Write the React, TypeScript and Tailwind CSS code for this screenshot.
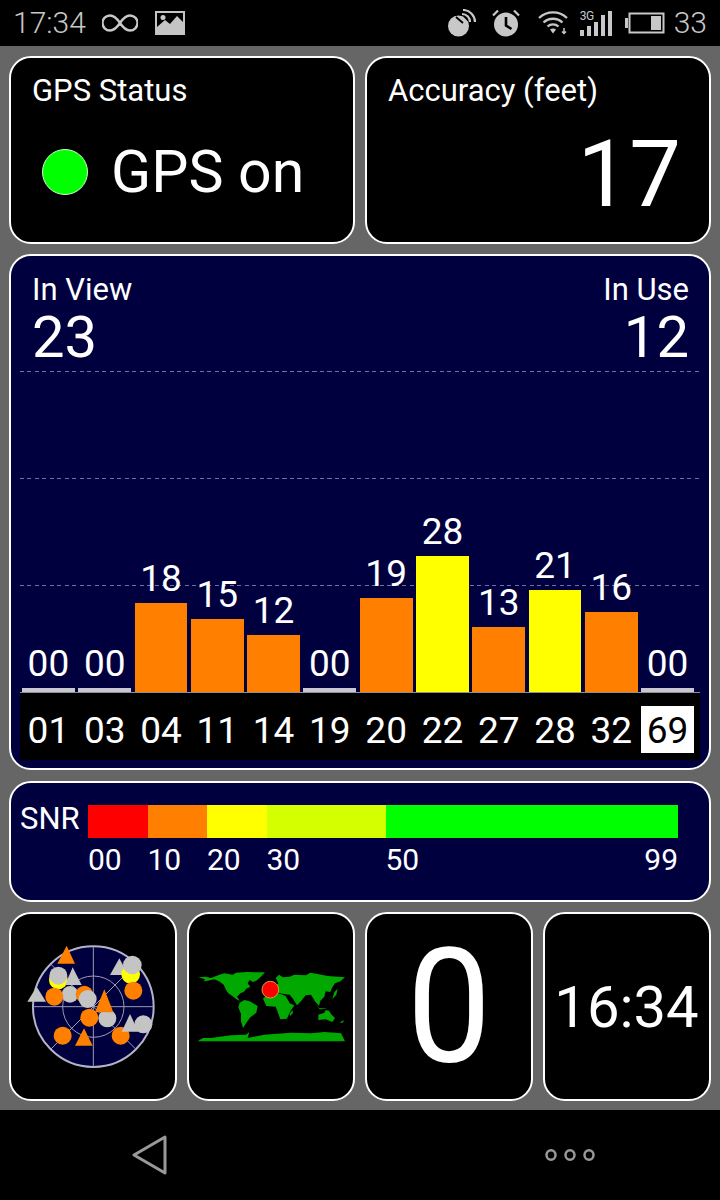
const FONT = "font-['Roboto',sans-serif]";

type Sat = { id: string; snr: number; color: string; height: number; active?: boolean };

const sats: Sat[] = [
  { id: "01", snr: 0, color: "bg-[#c8c8d0]", height: 4 },
  { id: "03", snr: 0, color: "bg-[#c8c8d0]", height: 4 },
  { id: "04", snr: 18, color: "bg-[#ff8000]", height: 89 },
  { id: "11", snr: 15, color: "bg-[#ff8000]", height: 73 },
  { id: "14", snr: 12, color: "bg-[#ff8000]", height: 57 },
  { id: "19", snr: 0, color: "bg-[#c8c8d0]", height: 4 },
  { id: "20", snr: 19, color: "bg-[#ff8000]", height: 94 },
  { id: "22", snr: 28, color: "bg-[#ffff00]", height: 136 },
  { id: "27", snr: 13, color: "bg-[#ff8000]", height: 65 },
  { id: "28", snr: 21, color: "bg-[#ffff00]", height: 102 },
  { id: "32", snr: 16, color: "bg-[#ff8000]", height: 80 },
  { id: "69", snr: 0, color: "bg-[#c8c8d0]", height: 4, active: true },
];

function fmt(n: number) {
  return n.toString().padStart(2, "0");
}

function StatusBar() {
  return (
    <div className="flex h-[46px] shrink-0 items-center bg-black pl-[13px] pr-[13px] text-[#c8c8c8]">
      <span className="text-[30px] font-light leading-none">17:34</span>
      <svg className="ml-[16px]" width="36" height="20" viewBox="0 0 36 20" fill="none" stroke="#c8c8c8" strokeWidth="2.4">
        <path d="M18 10C14 4 11 2.5 8 2.5a7.5 7.5 0 0 0 0 15c3 0 6-1.5 10-7.5s7-7.5 10-7.5a7.5 7.5 0 0 1 0 15c-3 0-6-1.5-10-7.5z" />
      </svg>
      <svg className="ml-[17px]" width="30" height="24" viewBox="0 0 30 24">
        <path fillRule="evenodd" fill="#c4c4c4" d="M0 0h30v24H0zM2 2v14l8-7 5 4 7-8 6 6V2z" />
        <circle cx="8" cy="6.5" r="2.5" fill="#c8c8c8" />
      </svg>
      <div className="ml-auto flex items-center">
        {/* GPS dish */}
        <svg width="30" height="28" viewBox="0 0 30 28" fill="none">
          <circle cx="11.5" cy="17" r="10.5" fill="#c8c8c8" />
          <path stroke="#000" strokeWidth="1.8" d="M9 8 16 14M17 7 22 12" />
          <path stroke="#c8c8c8" strokeWidth="2.2" d="M15 5c5 0 8 4 8 8M16 1c7 0 12 6 12 12" />
        </svg>
        {/* Alarm clock */}
        <svg className="ml-[15px]" width="28" height="28" viewBox="0 0 28 28">
          <circle cx="14" cy="15.5" r="12" fill="#c8c8c8" />
          <path d="M14 8v8.5l5.5 3.5" fill="none" stroke="#000" strokeWidth="2.6" />
          <path d="M1 6.5 6 1.5M27 6.5 22 1.5" stroke="#c8c8c8" strokeWidth="2.2" />
        </svg>
        {/* Wi-Fi with download arrow */}
        <svg className="ml-[18px]" width="30" height="24" viewBox="0 0 30 24" fill="none" stroke="#c8c8c8">
          <path strokeWidth="2.3" d="M1 7c8-7.5 20-7.5 28 0M5.5 11.5c5.5-5 13.5-5 19 0M9.5 15.5c3-2.8 8-2.8 11 0" />
          <path fill="#c8c8c8" stroke="none" d="M12 18.5c1.5-1.2 4.5-1.2 6 0l-3 4z" />
          <path strokeWidth="1.5" d="M26 17v5.5M24 20.5l2 2 2-2" />
        </svg>
        {/* Cellular signal */}
        <div className="relative ml-[12px] h-[25px] w-[32px]">
          <span className="absolute left-0 top-[-1px] text-[12px] leading-none tracking-[-0.5px] text-[#c8c8c8]">3G</span>
          <svg className="absolute inset-0" width="32" height="25" viewBox="0 0 32 25" fill="#c8c8c8">
            <path d="M0 19h4v6H0zM7 15h4v10H7zM14 11h4v14h-4zM21 4h4v21h-4zM28 0h4v25h-4z" />
          </svg>
        </div>
        {/* Battery */}
        <svg className="ml-[13px]" width="40" height="22" viewBox="0 0 40 22">
          <path fill="#c8c8c8" d="M0 6h3v10H0z" />
          <rect x="4.5" y="1.5" width="34" height="19" fill="none" stroke="#c8c8c8" strokeWidth="2" />
          <path fill="#c8c8c8" d="M26 4h10v14H26z" />
        </svg>
        <span className="ml-[9px] text-[30px] font-light leading-none">33</span>
      </div>
    </div>
  );
}

function Card({ className, children }: { className: string; children?: React.ReactNode }) {
  return <div className={`rounded-[22px] border-2 border-white ${className}`}>{children}</div>;
}

function Radar() {
  const gray = "#c4c4c4";
  const orange = "#ff8000";
  const yellow = "#ffff00";
  return (
    <svg className="mb-[9px] mr-[6px]" width="140" height="134" viewBox="0 0 420 402">
      <circle cx="220" cy="215" r="181" fill="#00003f" stroke="#b4b4c8" strokeWidth="6" />
      <g stroke="#9c9cb4" strokeWidth="3" fill="none">
        <circle cx="220" cy="215" r="92" />
        <path d="M220 34V396M39 215H401M92 87 348 343M348 87 92 343" />
      </g>
      <path fill={orange} d="M140 32 165 86H112z" />
      <path fill={gray} d="M50 155 78 200H22z" />
      <circle cx="115" cy="135" r="28" fill={yellow} />
      <circle cx="115" cy="122" r="27" fill={gray} />
      <path fill={gray} d="M158 97 185 150H135z" />
      <path fill={gray} d="M298 70 325 120H270z" />
      <circle cx="332" cy="118" r="28" fill={yellow} />
      <circle cx="337" cy="90" r="28" fill={gray} />
      <circle cx="340" cy="167" r="27" fill={orange} />
      <circle cx="150" cy="178" r="25" fill={gray} />
      <circle cx="103" cy="185" r="27" fill={orange} />
      <circle cx="193" cy="178" r="26" fill={orange} />
      <circle cx="203" cy="192" r="27" fill={gray} />
      <circle cx="262" cy="250" r="27" fill={gray} />
      <path fill={orange} d="M253 163 280 232H225z" />
      <circle cx="208" cy="248" r="27" fill={orange} />
      <circle cx="128" cy="302" r="27" fill={orange} />
      <path fill={orange} d="M192 280 218 332H165z" />
      <circle cx="302" cy="302" r="27" fill={orange} />
      <path fill={gray} d="M330 237 355 290H305z" />
      <circle cx="370" cy="268" r="27" fill={gray} />
    </svg>
  );
}

function WorldMap() {
  return (
    <svg className="mb-[1px]" width="160" height="85" viewBox="0 0 480 255">
      <g fill="#00a800">
        {/* North America and Greenland */}
        <path d="M22 40 44 38 60 42 85 32 100 28 125 32 135 26 168 24 222 25 212 36 196 50 186 54 176 48 170 58 178 68 166 74 158 84 148 88 138 98 146 110 136 106 124 96 112 88 104 76 98 62 84 52 70 46 50 50 38 52 42 46z" />
        {/* South America */}
        <path d="M146 116 160 108 176 112 200 126 196 146 178 160 166 176 156 192 150 172 150 150 142 130z" />
        {/* Eurasia */}
        <path d="M254 42 264 32 276 40 296 38 310 32 345 34 358 26 380 30 410 36 462 40 448 52 432 58 424 70 418 84 404 82 400 98 388 110 384 126 372 112 360 92 344 94 330 112 318 124 306 104 296 92 278 90 262 86 252 70 262 58z" />
        {/* Africa */}
        <path d="M216 104 228 92 262 88 284 96 296 118 310 124 298 142 288 164 268 166 258 138 254 128 226 126z" />
        {/* Australia and islands */}
        <path d="M382 152 400 146 404 138 414 140 420 150 432 162 424 174 404 166 382 168z" />
        <path d="M446 176 458 168 456 176z" />
        <path d="M372 118 384 132 410 134 386 136z" />
        <path d="M304 138 306 146 298 156 296 150z" />
        <path d="M430 84 440 74 436 92 424 106z" />
        {/* Antarctica */}
        <path d="M22 230 36 222 60 222 120 214 165 212 175 204 170 222 220 212 300 206 360 208 400 204 450 208 462 232 22 232z" />
      </g>
      <circle cx="238" cy="77" r="25" fill="#ff0000" stroke="#d8a030" strokeWidth="3" />
    </svg>
  );
}

function Chart() {
  return (
    <Card className="flex h-[516px] flex-col bg-[#00003f]">
      <div className="flex h-[115px] justify-between pl-[21px] pr-[20px] pt-[16px] text-white">
        <div>
          <div className="text-[31px] leading-[36px]">In View</div>
          <div className="text-[58px] leading-[58px]">23</div>
        </div>
        <div className="text-right">
          <div className="text-[31px] leading-[36px]">In Use</div>
          <div className="text-[58px] leading-[58px]">12</div>
        </div>
      </div>
      <div className="relative mx-[9px] h-[321px]">
        {/* Dashed SNR reference lines */}
        <div className="absolute inset-0 flex flex-col gap-[106px]">
          <div className="h-px bg-[repeating-linear-gradient(90deg,#7070a8_0_4px,transparent_4px_7.5px)]" />
          <div className="h-px bg-[repeating-linear-gradient(90deg,#7070a8_0_4px,transparent_4px_7.5px)]" />
          <div className="h-px bg-[repeating-linear-gradient(90deg,#7070a8_0_4px,transparent_4px_7.5px)]" />
        </div>
        <div className="relative grid h-full grid-cols-12 items-end gap-x-[3.5px] pl-[2px] pr-[6px]">
          {sats.map((s) => (
            <div key={s.id} className="flex flex-col items-center">
              <span className="mb-[5px] text-[37px] leading-[38px] text-white">{fmt(s.snr)}</span>
              <div className={`w-full ${s.color}`} style={{ height: s.height }} />
            </div>
          ))}
        </div>
      </div>
      <div className="mx-[9px] grid h-[68px] grid-cols-12 gap-x-[3.5px] border-t border-[#8c8c9c] bg-black pl-[2px] pr-[6px] pt-[13px] text-white">
        {sats.map((s) => (
          <div
            key={s.id}
            className={`flex h-[47px] items-center justify-center pt-[2px] text-[37px] leading-none ${s.active ? "bg-white text-black" : ""}`}
          >
            {s.id}
          </div>
        ))}
      </div>
    </Card>
  );
}

function SnrScale() {
  const label = "text-[30px] leading-none text-white";
  return (
    <Card className="flex h-[121px] bg-[#00003f] pl-[9px] pt-[20px]">
      <div className="w-[68px] text-[31px] leading-none text-white">SNR</div>
      <div className="mt-[2px] w-[590px]">
        <div className="flex h-[33px]">
          <div className="w-[59.5px] bg-[#ff0000]" />
          <div className="w-[59.5px] bg-[#ff8000]" />
          <div className="w-[59.5px] bg-[#ffff00]" />
          <div className="w-[119px] bg-[#d4ff00]" />
          <div className="w-[292.5px] bg-[#00ff00]" />
        </div>
        <div className={`mt-[7px] flex ${label}`}>
          <span className="w-[59.5px]">00</span>
          <span className="w-[59.5px]">10</span>
          <span className="w-[59.5px]">20</span>
          <span className="w-[119px]">30</span>
          <span className="flex w-[292.5px] justify-between">
            <span>50</span>
            <span>99</span>
          </span>
        </div>
      </div>
    </Card>
  );
}

export default function App() {
  return (
    <div className={`flex h-[1200px] w-[720px] flex-col bg-black ${FONT}`}>
      <StatusBar />
      <main className="flex h-[1064px] flex-col bg-[#666666] px-[9px] pt-[10px]">
        <div className="grid grid-cols-2 gap-x-[10px]">
          <Card className="h-[188px] bg-black pl-[21px] pt-[15px] text-white">
            <div className="text-[31px] leading-[36px]">GPS Status</div>
            <div className="mt-[28px] flex items-center">
              <div className="ml-[10px] h-[46px] w-[46px] rounded-full border border-[#d0ffd0] bg-[#00ff00]" />
              <span className="ml-[23px] text-[59px] leading-[70px]">GPS on</span>
            </div>
          </Card>
          <Card className="h-[188px] bg-black pl-[21px] pr-[28px] pt-[15px] text-white">
            <div className="text-[31px] leading-[36px]">Accuracy (feet)</div>
            <div className="mt-[11px] text-right text-[92px] leading-[110px]">17</div>
          </Card>
        </div>
        <div className="mt-[10px]">
          <Chart />
        </div>
        <div className="mt-[11px]">
          <SnrScale />
        </div>
        <div className="mt-[10px] grid grid-cols-4 gap-x-[10px]">
          <Card className="flex h-[189px] items-center justify-center bg-black">
            <Radar />
          </Card>
          <Card className="flex h-[189px] items-center justify-center bg-black">
            <WorldMap />
          </Card>
          <Card className="flex h-[189px] items-center justify-center bg-black text-[160px] leading-none text-white">
            <span className="scale-x-[0.94]">0</span>
          </Card>
          <Card className="flex h-[189px] items-center justify-center bg-black pr-[1px] text-[58px] leading-none text-white">
            16:34
          </Card>
        </div>
      </main>
      <nav className="flex h-[90px] items-center bg-black pl-[132px] pr-[125px]">
        <svg width="36" height="42" viewBox="0 0 36 42" fill="none" stroke="#999999" strokeWidth="3" strokeLinejoin="round">
          <path d="M33 3 2 21 33 39z" />
        </svg>
        <svg className="ml-auto" width="50" height="14" viewBox="0 0 50 14" fill="none" stroke="#999999" strokeWidth="2.5">
          <ellipse cx="6" cy="7" rx="4.5" ry="4.8" />
          <ellipse cx="25" cy="7" rx="4.5" ry="4.8" />
          <ellipse cx="44" cy="7" rx="4.5" ry="4.8" />
        </svg>
      </nav>
    </div>
  );
}
